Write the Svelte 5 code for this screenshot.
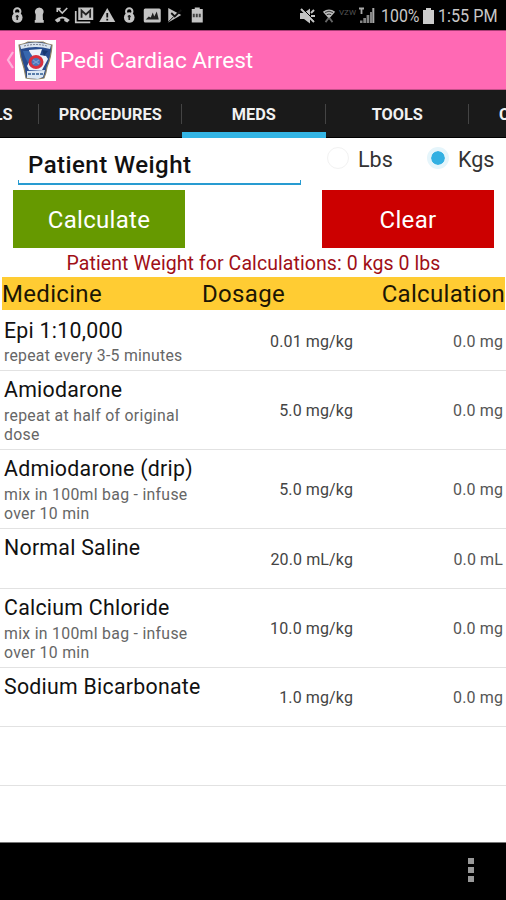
<script>
  const meds = [
    { name: 'Epi 1:10,000', note: 'repeat every 3-5 minutes', dose: '0.01 mg/kg', calc: '0.0 mg', h: 61 },
    { name: 'Amiodarone', note: 'repeat at half of original dose', dose: '5.0 mg/kg', calc: '0.0 mg', h: 79 },
    { name: 'Admiodarone (drip)', note: 'mix in 100ml bag - infuse over 10 min', dose: '5.0 mg/kg', calc: '0.0 mg', h: 79 },
    { name: 'Normal Saline', note: '', dose: '20.0 mL/kg', calc: '0.0 mL', h: 60 },
    { name: 'Calcium Chloride', note: 'mix in 100ml bag - infuse over 10 min', dose: '10.0 mg/kg', calc: '0.0 mg', h: 79 },
    { name: 'Sodium Bicarbonate', note: '', dose: '1.0 mg/kg', calc: '0.0 mg', h: 59 },
    { name: '', note: '', dose: '', calc: '', h: 59 }
  ];
  const tabs = ['LS', 'PROCEDURES', 'MEDS', 'TOOLS', 'C'];
  let unit = $state('Kgs');
</script>

<div class="screen">
  <div class="status">
    <div class="notes">
      <svg viewBox="0 0 22 20"><circle cx="11" cy="6.500" r="3.200" fill="none" stroke="#c4c4c4" stroke-width="2" /><circle cx="11" cy="12.500" r="5.300" fill="#c4c4c4" /><path d="M11 10v5M9.500 11.500h3" stroke="#222" stroke-width="1.600" /></svg>
      <svg viewBox="0 0 22 20"><path d="M11 2.500a4.500 4.500 0 0 1 3.500 7.300l.2 5.200H15.500v2.800h-9V15h.8l.2-5.200A4.500 4.500 0 0 1 11 2.500z" fill="#c4c4c4" /></svg>
      <svg viewBox="0 0 22 20"><path d="M6.500 3.500l4.500 4.500 5-5M6 7V3.500h3.500" fill="none" stroke="#c4c4c4" stroke-width="1.600" /><path d="M3.500 15q7.500-7 15 0l-2.500 2.500-3-1.500v-2.300q-2-.6-4 0V16l-3 1.500z" fill="#c4c4c4" /></svg>
      <svg viewBox="0 0 22 20"><path d="M2.500 6v11.300H17" fill="none" stroke="#c4c4c4" stroke-width="1.700" /><path d="M5 2.500h15v12.500H5z" fill="#c4c4c4" /><path d="M8.300 12.700V5.500l4.300 4 4.300-4v7.200" fill="none" stroke="#222" stroke-width="1.800" /></svg>
      <svg viewBox="0 0 22 20"><path d="M11 3l8 14H3z" fill="#c4c4c4" /><path d="M11 8v4.500M11 13.700v1.800" stroke="#111" stroke-width="1.800" /></svg>
      <svg viewBox="0 0 22 20"><circle cx="11" cy="6.500" r="3.200" fill="none" stroke="#c4c4c4" stroke-width="2" /><circle cx="11" cy="12.500" r="5.300" fill="#c4c4c4" /><path d="M11 10v5M9.500 11.500h3" stroke="#222" stroke-width="1.600" /></svg>
      <svg viewBox="0 0 22 20"><rect x="2.500" y="3.500" width="17" height="14" rx="1.500" fill="#c4c4c4" /><path d="M4.500 14.500l3-3 2 1 2-5 1.500 4 2.500-5 2 8z" fill="#222" /></svg>
      <svg viewBox="0 0 22 20"><path d="M5 3l13 7-13 7.500z" fill="#c4c4c4" /><path d="M8 8l3.500 3.500L18 5" fill="none" stroke="#111" stroke-width="1.800" /><path d="M4.500 17.500l6-6" stroke="#111" stroke-width="1" /></svg>
      <svg viewBox="0 0 22 20"><path d="M8.500 2.500h5V4h3v13.500h-11V4h3z" fill="#c4c4c4" /><path d="M6.500 10.500h9" stroke="#444" stroke-width="3.500" stroke-dasharray="2 1" /></svg>
    </div>
    <div class="sys">
      <svg class="mute" viewBox="0 0 16 18"><path d="M0 6h4l6-4.500v15L4 12H0z" fill="#c4c4c4" /><path d="M1 2l13 13M11 6l3-3M11 9h4" stroke="#c4c4c4" stroke-width="2" /><path d="M3 2l12 12" stroke="#000" stroke-width="1" /></svg>
      <svg class="wifi" viewBox="0 0 16 18"><path d="M1 4q7-5 14 0l-7 8z" fill="#bbb" /><path d="M3.500 5q4.500-3 9 0M5.500 7.500q2.500-1.500 5 0" fill="none" stroke="#222" /><path d="M4 16l3-4h2l3 4" stroke="#666" stroke-width="2" fill="none" /></svg>
      <span class="lte">VZW</span>
      <svg class="signal" viewBox="0 0 16 18"><path d="M0 1.500h5M2.500 1v6" stroke="#aaa" stroke-width="1.800" /><path d="M1 16v-2.500h2.500V16zM4.300 16v-5H7v5zM7.600 16V8h2.700v8zM11 16V5h2v11z" fill="#858585" /><path d="M13.300 16V1h2v15z" fill="#aaa" /></svg>
      <span class="percent">100%</span>
      <svg class="battery" viewBox="0 0 11 16"><path d="M3 0h5v2h3v14H0V2h3z" fill="#ccc" /></svg>
      <span class="clock">1:55 PM</span>
    </div>
  </div>

  <header>
    <svg class="back" viewBox="0 0 8 20"><path d="M7 2L2 10l5 8" fill="none" stroke="#ffb3dc" stroke-width="2.200" /></svg>
    <svg class="patch" viewBox="0 0 41 41">
      <rect width="41" height="41" fill="#fff" />
      <path d="M4 5q6-1 9-3h15q3 2 9 3-1 13-5 22-1 7-3 11-9 2-18 0-1-5-2-10Q5 17 4 5z" fill="#284b8e" stroke="#8f8162" stroke-width="1.200" />
      <path d="M5 5q15-5 31 0l-1 4q-14-4-29 0z" fill="#dbe4ef" />
      <path d="M9 6q12-3 23 0" fill="none" stroke="#777e91" stroke-dasharray="2 1" />
      <path d="M14 10l13-1-2 6 6 1 2 3-6 11H14l-2-4 3-6z" fill="#eef3fa" />
      <path d="M8 11l6 0 4 6-5 6-3-6z" fill="#3767ae" />
      <path d="M27 10l6 1-4 5z" fill="#17376f" />
      <ellipse cx="21" cy="22" rx="6" ry="5.500" fill="#4976ba" stroke="#d9303e" stroke-width="3" />
      <path d="M18 20l6 4m0-4l-6 4" stroke="#7d9bd0" stroke-width="1.500" />
      <path d="M12 31l18-1-2 7-5 2-11-1z" fill="#dce8f3" />
      <path d="M13 34h15" stroke="#597eaa" stroke-width="2" stroke-dasharray="3 1" />
    </svg>
    <h1>Pedi Cardiac Arrest</h1>
  </header>

  <nav>
    {#each tabs as tab}
      <div class="tab" class:active={tab === 'MEDS'}><span>{tab}</span></div>
    {/each}
  </nav>

  <main>
    <div class="entry">
      <div class="field">Patient Weight</div>
      <div class="units">
        {#each ['Lbs', 'Kgs'] as u}
          <button class="unit" onclick={() => (unit = u)}><i class:on={unit === u}></i>{u}</button>
        {/each}
      </div>
    </div>
    <div class="actions">
      <button class="calculate">Calculate</button>
      <button class="clear">Clear</button>
    </div>
    <p class="result">Patient Weight for Calculations: 0 kgs 0 lbs</p>
    <div class="thead"><span>Medicine</span><span>Dosage</span><span>Calculation</span></div>
    {#each meds as m, i}
      <div class="row" class:first={i === 0} style="height:{m.h}px">
        <div class="med"><div class="name">{m.name}</div><div class="note">{m.note}</div></div>
        <div class="dose">{m.dose}</div>
        <div class="calc">{m.calc}</div>
      </div>
    {/each}
  </main>

  <footer><div class="more"><b></b><b></b><b></b></div></footer>
</div>

<style>
  :global(body) { background: #fff; }
  .screen { width: 506px; height: 900px; overflow: hidden; display: flex; flex-direction: column; font-family: Roboto, sans-serif; color: #111; background: #fff; box-sizing: border-box; }
  .screen :global(*) { box-sizing: border-box; }
  .status { height: 30px; flex: none; background: #000; color: #c8c8c8; display: flex; justify-content: space-between; }
  .notes { display: flex; padding: 5px 0 0 5.500px; }
  .notes svg { width: 22.500px; height: 20px; }
  .sys { display: flex; align-items: center; padding: 2px 9px 0 0; white-space: nowrap; }
  .sys svg { flex: none; }
  .sys span { display: block; flex: none; font-size: 18.500px; line-height: 24px; transform-origin: left center; }
  .mute { width: 16px; height: 18px; margin-right: 6px; }
  .wifi { width: 14px; height: 18px; margin-right: 3px; }
  .sys .lte { width: 18px; font-size: 8px; line-height: 10px; color: #555; margin: -6px 2px 0 0; }
  .signal { width: 16px; height: 18px; margin-right: 6px; }
  .sys .percent { width: 38px; transform: scaleX(.86); }
  .battery { width: 11px; height: 16px; margin: 0 4px; }
  .sys .clock { width: 59px; transform: scaleX(.875); }
  header { height: 60px; flex: none; display: flex; align-items: center; background: #ff69b4; border-top: 1px solid #a93c75; border-bottom: 1px solid #c34f89; padding-left: 6px; }
  .back { width: 8px; height: 20px; }
  .patch { width: 41px; height: 41px; margin: 0 4px 0 1px; }
  h1 { margin: 2px 0 0; font-size: 22.600px; font-weight: 400; color: #fff; line-height: 30px; white-space: nowrap; }
  nav { height: 48px; flex: none; display: flex; background: #1a1a1a; border-bottom: 1px solid #000; }
  .tab { width: 143.500px; flex: none; display: flex; align-items: center; justify-content: center; color: #f1f1f1; font-weight: 700; font-size: 16.300px; padding-top: 2px; background: linear-gradient(#444, #444) right 14px / 1px 20px no-repeat; }
  .tab:first-child { width: 38.500px; justify-content: flex-end; padding-right: 26px; }
  .tab:last-child { width: 36px; justify-content: flex-start; padding-left: 30px; background: none; }
  .tab.active { border-bottom: 6px solid #33b5e5; margin-bottom: -1px; padding-top: 7px; }
  main { height: 704px; flex: none; display: flex; flex-direction: column; }
  .entry { height: 52px; display: flex; padding-left: 18px; flex: none; }
  .field { width: 283px; flex: none; height: 47px; padding: 10px 0 0 10px; font-size: 24px; font-weight: 500; letter-spacing: .45px; line-height: 34px; background: linear-gradient(#289bd1, #289bd1) left bottom / 100% 2px no-repeat, linear-gradient(#289bd1, #289bd1) left bottom / 1px 5px no-repeat, linear-gradient(#289bd1, #289bd1) right bottom / 1px 5px no-repeat; }
  .units { display: flex; padding-left: 26px; align-items: flex-start; }
  button { border: 0; font-family: inherit; }
  .unit { width: 100px; flex: none; height: 42px; padding: 0; background: none; display: flex; align-items: center; font-size: 21.500px; color: #333; }
  .unit i { width: 22px; height: 22px; border-radius: 50%; border: 1px solid #f2f2f2; margin-right: 9px; margin-top: -2px; flex: none; }
  .unit i.on { border: 4px solid #e5f5fb; background: #33b0e2 padding-box; }
  .actions { height: 58px; flex: none; display: flex; justify-content: space-between; padding: 0 12px 0 13px; }
  .actions button { width: 172px; height: 58px; color: #fff; font-size: 24px; letter-spacing: .3px; padding: 2px 0 0; }
  .actions .calculate { background: #690; }
  .actions .clear { background: #c00; }
  .result { margin: 0; height: 29px; flex: none; text-align: center; color: #a00f17; font-size: 19.500px; letter-spacing: .08px; line-height: 31px; padding-left: 1px; white-space: nowrap; }
  .thead { height: 33px; flex: none; background: #ffcc33; margin: 0 1px 0 2px; display: flex; font-size: 24px; letter-spacing: .32px; line-height: 35px; color: #1c1604; }
  .thead span:first-child { width: 200px; }
  .thead span:last-child { margin-left: auto; }
  .row { flex: none; display: flex; border-bottom: 1px solid #e2e2e2; padding: 0 3px 0 4px; align-items: center; }
  .med { width: 198px; align-self: flex-start; padding-top: 5px; }
  .first .med { padding-top: 7px; }
  .row .name { font-size: 21.300px; letter-spacing: .27px; line-height: 28px; white-space: nowrap; }
  .note { font-size: 15.800px; letter-spacing: .3px; line-height: 19px; color: #666; padding-top: 2px; }
  .first .note { padding-top: 1px; letter-spacing: .25px; }
  .dose { width: 151px; text-align: right; font-size: 16px; letter-spacing: .12px; color: #444; padding-top: 1px; }
  .calc { margin-left: auto; font-size: 16px; letter-spacing: .12px; color: #555; padding-top: 1px; }
  .first .dose, .first .calc { padding-top: 3px; }
  footer { flex: 1; background: #000; border-top: 1px solid #777; display: flex; justify-content: flex-end; padding: 15px 32px 0 0; }
  .more { display: flex; flex-direction: column; gap: 3px; }
  .more b { width: 6px; height: 6px; background: #999; }
</style>
